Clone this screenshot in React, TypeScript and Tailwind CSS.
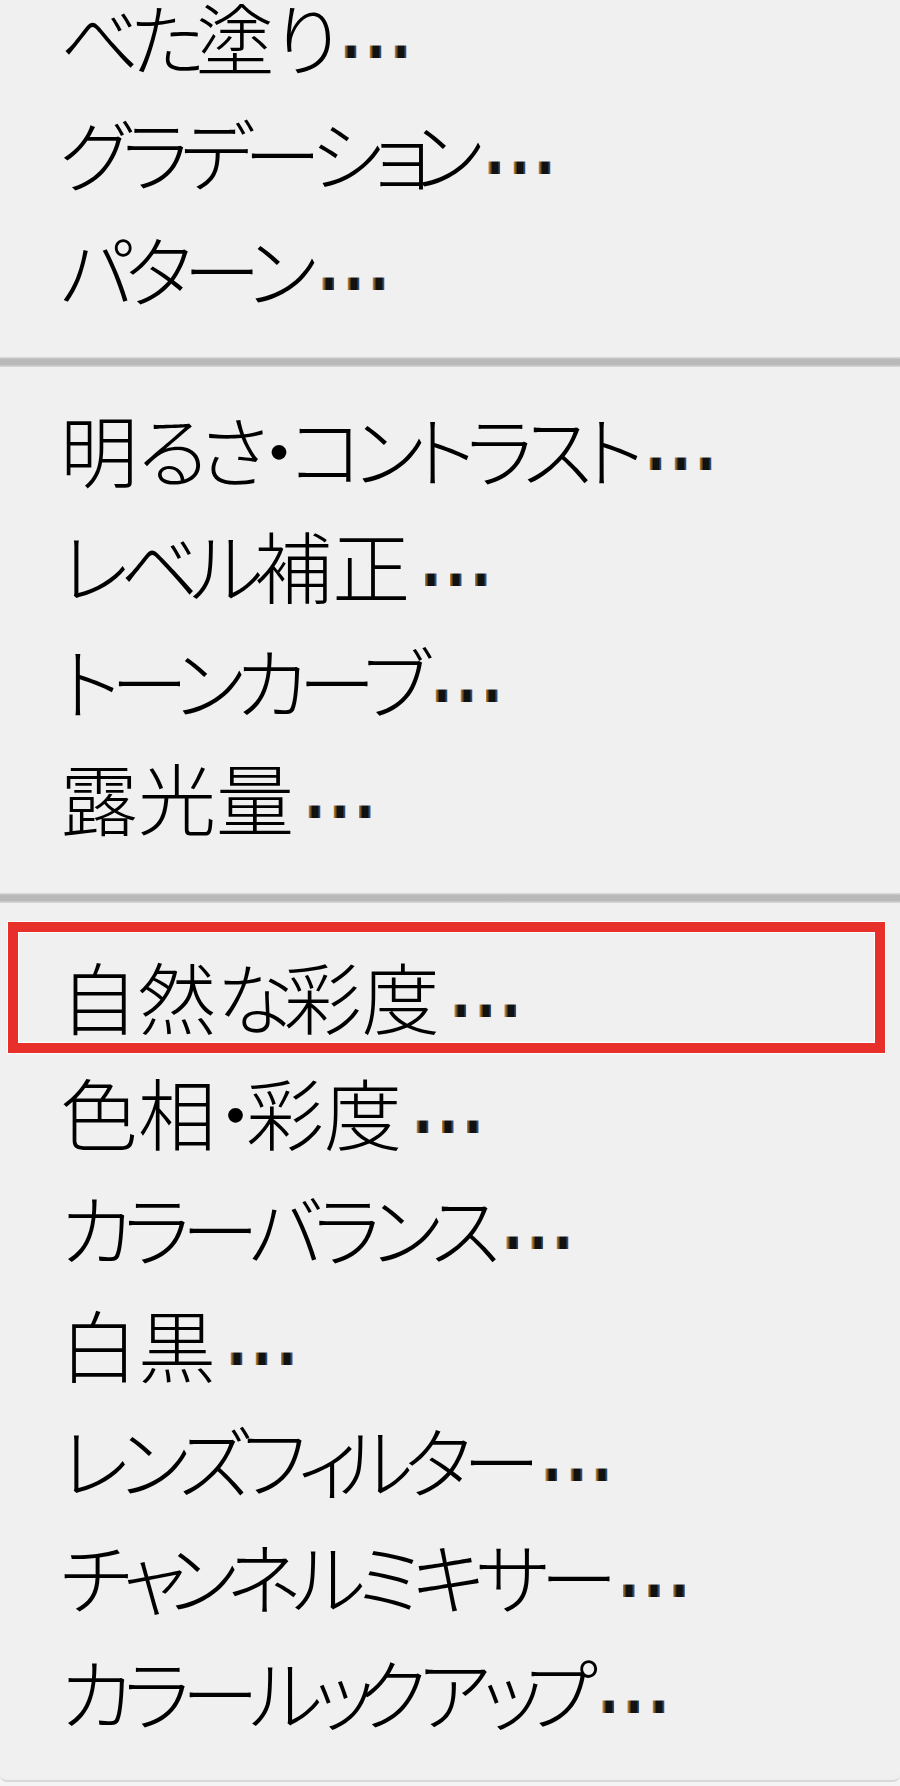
const SECTIONS = [
  ['べた塗り', 'グラデーション', 'パターン'],
  ['明るさ・コントラスト', 'レベル補正', 'トーンカーブ', '露光量'],
  [
    '自然な彩度',
    '色相・彩度',
    'カラーバランス',
    '白黒',
    'レンズフィルター',
    'チャンネルミキサー',
    'カラールックアップ',
  ],
];

const HIGHLIGHTED = '自然な彩度';

// kana in the menu font are narrower than kanji, small kana even more so
type Kind = 'kanji' | 'kana' | 'small';

const kindOf = (ch: string): Kind => {
  if (/[ッョャュィェォァ]/.test(ch)) return 'small';
  if (/[\u3040-\u30ff]/.test(ch)) return 'kana';
  return 'kanji';
};

const splitRuns = (label: string) => {
  const runs: { text: string; kind: Kind }[] = [];
  for (const ch of label) {
    const kind = kindOf(ch);
    const last = runs[runs.length - 1];
    if (last && last.kind === kind) last.text += ch;
    else runs.push({ text: ch, kind });
  }
  return runs;
};

const TRACKING: Record<Kind, string> = {
  kanji: '',
  kana: 'tracking-[-9px]',
  small: 'tracking-[-18px]',
};

// the three dots keep the orange / blue fringe of the screenshot
const Ellipsis = () => (
  <span className="ml-[8px] inline-flex font-['DejaVu_Sans',sans-serif] text-[66px] font-bold leading-none">
    {[0, 1, 2].map((i) => (
      <span
        key={i}
        className="bg-[linear-gradient(to_right,#d08a30_28%,#111_42%,#111_62%,#3b82d6_76%)] bg-clip-text text-transparent"
      >
        .
      </span>
    ))}
  </span>
);

const MenuItem = ({ label }: { label: string }) => (
  <div className="relative flex h-[116px] items-center pl-[60px]">
    {label === HIGHLIGHTED && (
      <div className="pointer-events-none absolute left-[8px] right-[15px] top-[-15px] bottom-0 border-[10px] border-[#e8302a] shadow-[0_0_0_1px_#ffffff,inset_0_0_0_1px_#ffffff]" />
    )}
    <span className="whitespace-nowrap font-['Noto_Sans_CJK_JP',sans-serif] text-[78px] font-light leading-none text-black [font-feature-settings:'palt']">
      {splitRuns(label).map((run, i) => (
        <span key={i} className={TRACKING[run.kind]}>
          {run.text}
        </span>
      ))}
    </span>
    <Ellipsis />
  </div>
);

const Separator = ({ height, top }: { height: string; top: string }) => (
  <div className={`${height} ${top}`}>
    <div className="h-[10px] bg-[linear-gradient(to_bottom,#dddddd,#b9b9b9_25%,#b9b9b9_75%,#dddddd)]" />
  </div>
);

export default function App() {
  return (
    <div className="min-h-screen bg-[#f4f4f4]">
      <div className="h-[1782px] overflow-hidden rounded-b-[7px] border-b-2 border-[#d8d8d8] bg-[#f0f0f0]">
        <div className="-mt-[22px]">
          {SECTIONS[0].map((label) => (
            <MenuItem key={label} label={label} />
          ))}
        </div>
        <Separator height="h-[64px]" top="pt-[31px]" />
        <div>
          {SECTIONS[1].map((label) => (
            <MenuItem key={label} label={label} />
          ))}
        </div>
        <Separator height="h-[83px]" top="pt-[39px]" />
        <div>
          {SECTIONS[2].map((label) => (
            <MenuItem key={label} label={label} />
          ))}
        </div>
      </div>
    </div>
  );
}
